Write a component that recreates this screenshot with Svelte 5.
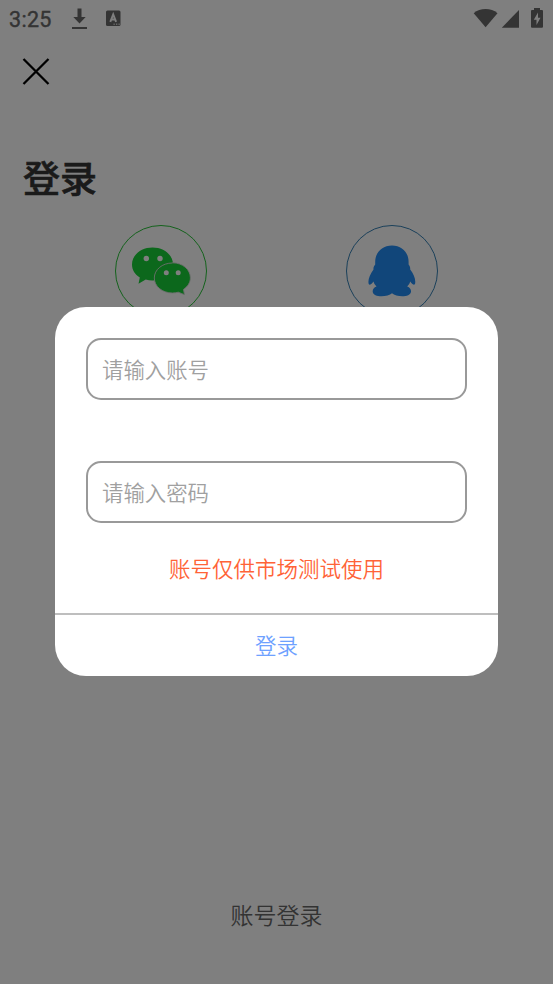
<script>
  let account = "";
  let password = "";
</script>

<style>
  :global(body) {
    margin: 0;
    background-color: white;
    font-family: "Noto Sans CJK SC", sans-serif;
  }

  .screen {
    display: flex;
    flex-direction: column;
    box-sizing: border-box;
    width: 553px;
    height: 984px;
    overflow: hidden;
  }

  .status {
    display: flex;
    align-items: center;
    height: 38px;
    color: #686868;
  }

  .time {
    width: 61px;
    padding: 2px 0 0 9px;
    font: 400 21.5px/36px Roboto, sans-serif;
    letter-spacing: 0.3px;
    -webkit-text-stroke: 0.4px currentColor;
  }

  .status-right {
    margin-left: auto;
  }

  svg {
    display: block;
  }

  .close {
    align-self: flex-start;
    margin: 18px 0 0 20px;
    padding: 0;
    border: 0;
    background: none;
  }

  h1 {
    margin: 62px 0 0 23px;
    font-size: 37px;
    line-height: 56px;
    font-weight: 500;
    -webkit-text-stroke: 0.6px currentColor;
    color: #343434;
  }

  .socials {
    display: flex;
    justify-content: space-around;
    margin-top: 20px;
    padding: 0 46px;
  }

  .switch {
    margin: auto 0 52px;
    font-size: 23px;
    line-height: 36px;
    text-align: center;
    font-weight: 350;
    color: #666;
  }

  .mask {
    position: fixed;
    inset: 0;
    display: flex;
    align-items: center;
    justify-content: center;
    padding-bottom: 1.4px;
    background-color: rgba(0, 0, 0, 0.5);
  }

  .dialog {
    box-sizing: border-box;
    width: 443px;
    height: 369px;
    padding-top: 31px;
    border-radius: 31px;
    background-color: white;
    overflow: hidden;
  }

  input {
    display: block;
    box-sizing: border-box;
    width: 381px;
    height: 62px;
    margin: 0 31px 61px;
    padding: 0 14px 1px;
    border: 2px solid #999;
    border-radius: 15px;
    background: none;
    outline: none;
    font: 350 21.4px "Noto Sans CJK SC", sans-serif;
  }

  input::placeholder {
    color: #a0a0a0;
    opacity: 1;
  }

  .password {
    margin-bottom: 29px;
  }

  .tip {
    margin: 0;
    font-size: 21.5px;
    line-height: 32px;
    font-weight: 350;
    text-align: center;
    color: #ff6337;
  }

  .submit {
    display: block;
    box-sizing: border-box;
    width: 100%;
    height: 63px;
    margin-top: 29px;
    padding: 0 0 2px;
    border: 0;
    border-top: 2px solid #bebebe;
    background: none;
    font: 350 21.5px "Noto Sans CJK SC", sans-serif;
    color: #6ea1ff;
  }
</style>

<div class="screen">
  <div class="status">
    <div class="time">3:25</div>
    <svg width="56" height="38" viewBox="0 0 56 38" fill="currentColor">
      <path d="M7.5 8.5h4v8.500h4.200l-6.200 6.500-6.200-6.500h4.200zM2 27h15v2H2z" />
      <rect x="36" y="10.500" width="14.500" height="15.500" rx="1.500" />
      <path d="M40.300 21.800l2.900-7.500 2.900 7.500M41.300 19.500h3.800" fill="none" stroke="#fff" stroke-width="1.900" />
      <path d="M43.500 23.600h1.300v1.300h-1.300zM46 23.600h1.300v1.300H46zM48.500 23.600h1.300v1.300h-1.300z" fill="#ccc" />
    </svg>
    <svg class="status-right" width="80" height="38" viewBox="0 0 80 38" fill="currentColor">
      <path d="M.7 13.200C7 7.700 18.200 7.700 24.500 13.200L12.600 27.300z" />
      <path d="M46 10v17.700H28.800z" />
      <path d="M61 8h6v2H69q1 0 1 1v15.700q0 1-1 1H59q-1 0-1-1V11q0-1 1-1h2z" />
      <path d="M65 12.500l-4.200 7.300h2.700v5.200l4-7.300h-2.500z" fill="#fff" />
    </svg>
  </div>

  <button class="close" aria-label="关闭">
    <svg width="32" height="31" viewBox="0 0 32 31" fill="none" stroke="#000" stroke-width="2.300">
      <path d="M3.500 3L28.500 28M28.500 3L3.500 28" />
    </svg>
  </button>

  <h1>登录</h1>

  <div class="socials">
    <svg width="92" height="92" viewBox="0 0 92 92">
      <circle cx="46" cy="46" r="45.500" fill="none" stroke="#28c438" />
      <path
        d="M37.500 22.500C26 22.500 17 30 17 39.500c0 5.500 3 10 7.800 13L23.500 58.700l7.200-4.100c2.200.6 4.400.9 6.800.9 11.600 0 20.500-7.200 20.500-16.300s-9-16.700-20.500-16.700z"
        fill="#18d038"
      />
      <path
        d="M57.500 38c-10.300 0-18.200 6.700-18.200 15s7.900 15 18.200 15c2 0 4-.3 5.800-.8l6.200 2.500-1-5.300c4.200-2.700 6.900-6.900 6.900-11.600 0-8.300-7.800-15-17.900-15z"
        fill="#18d038" stroke="#ddd" stroke-width=".9"
      />
      <g fill="#fff">
        <circle cx="31.300" cy="33.500" r="2.700" />
        <circle cx="45" cy="33.500" r="2.700" />
        <circle cx="51.300" cy="47.700" r="2.500" />
        <circle cx="63.200" cy="47.700" r="2.500" />
      </g>
    </svg>
    <svg width="92" height="92" viewBox="0 0 92 92">
      <circle cx="46" cy="46" r="45.500" fill="none" stroke="#3580b4" />
      <path
        d="M46 20.500c-10 0-16.800 7-16.800 16.500v2.500c-1.200 1.500-2 3-1.700 5-3.500 4.500-5.500 10-5 13.500.3 2.500 2 2.500 5-1.500.6 2.500 2 3.500 3 5-2.700 1-4 3-3.800 5.300.3 6 15 5.500 19.300 1.500 4.300 4 18.500 4.500 19-1.500.2-2.300-1.100-4.300-3.800-5.300 1-1.500 2.400-2.500 3-5 3 4 4.700 4 5 1.500.5-4-1.500-9-5-13.500.2-2-.4-3.500-1.600-5V37C62.600 27.500 56 20.500 46 20.500z"
        fill="#228cf4"
      />
    </svg>
  </div>

  <div class="switch">账号登录</div>
</div>

<div class="mask">
  <div class="dialog">
    <input class="account" bind:value={account} placeholder="请输入账号" />
    <input class="password" type="password" bind:value={password} placeholder="请输入密码" />
    <p class="tip">账号仅供市场测试使用</p>
    <button class="submit">登录</button>
  </div>
</div>
